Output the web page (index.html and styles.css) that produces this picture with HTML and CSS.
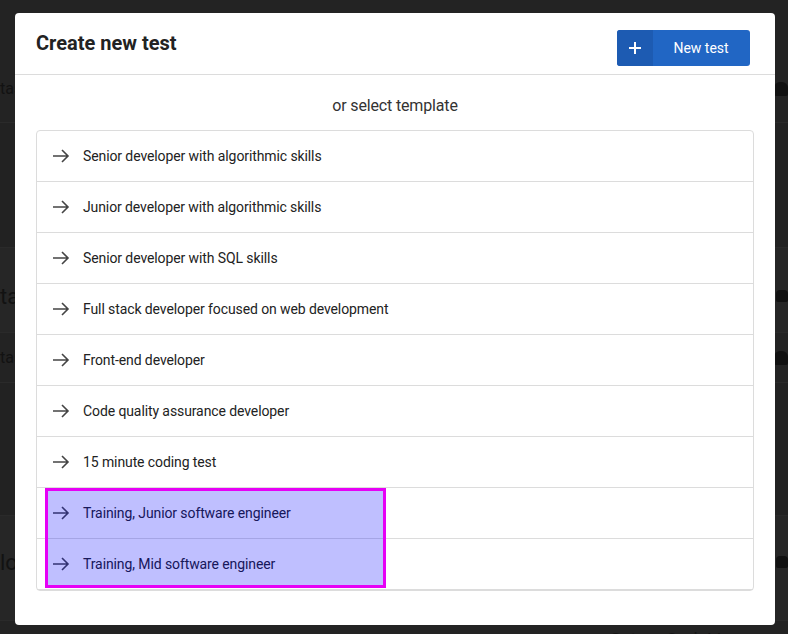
FILE: index.html
```html
<!DOCTYPE html>
<html>
<head>
<meta charset="utf-8">
<link rel="stylesheet" href="styles.css">
</head>
<body>
<div class="page">
  <div class="bg-row bg-r1"><span class="bg-text">tasks</span><span class="bg-icon person"></span></div>
  <div class="bg-row bg-r2"></div>
  <div class="bg-row bg-r3"><span class="bg-text big">tasks</span><span class="bg-icon car"></span></div>
  <div class="bg-row bg-r4"><span class="bg-text">tasks</span><span class="bg-icon person"></span></div>
  <div class="bg-row bg-r5"></div>
  <div class="bg-row bg-r6"><span class="bg-text big">lo</span><span class="bg-icon car"></span></div>
  <div class="bg-row bg-r7"><span class="bg-text">task</span><span class="bg-mid">Set up CodeLive</span><span class="bg-icon person"></span></div>
</div>

<div class="modal">
  <div class="modal-header">
    <h1 class="title">Create new test</h1>
    <button class="btn-new">
      <span class="btn-icon">
        <svg width="14" height="14" viewBox="0 0 14 14"><path d="M7 1v12M1 7h12" stroke="#fff" stroke-width="2" fill="none"/></svg>
      </span>
      <span class="btn-label">New test</span>
    </button>
  </div>
  <div class="modal-body">
    <div class="subtitle">or select template</div>
    <div class="list">
      <div class="item"><svg class="arrow" width="18" height="14" viewBox="0 0 18 14"><path d="M1 7h15M10 1l6 6-6 6" stroke="#444" stroke-width="1.6" fill="none"/></svg><span>Senior developer with algorithmic skills</span></div>
      <div class="item"><svg class="arrow" width="18" height="14" viewBox="0 0 18 14"><path d="M1 7h15M10 1l6 6-6 6" stroke="#444" stroke-width="1.6" fill="none"/></svg><span>Junior developer with algorithmic skills</span></div>
      <div class="item"><svg class="arrow" width="18" height="14" viewBox="0 0 18 14"><path d="M1 7h15M10 1l6 6-6 6" stroke="#444" stroke-width="1.6" fill="none"/></svg><span>Senior developer with SQL skills</span></div>
      <div class="item"><svg class="arrow" width="18" height="14" viewBox="0 0 18 14"><path d="M1 7h15M10 1l6 6-6 6" stroke="#444" stroke-width="1.6" fill="none"/></svg><span>Full stack developer focused on web development</span></div>
      <div class="item"><svg class="arrow" width="18" height="14" viewBox="0 0 18 14"><path d="M1 7h15M10 1l6 6-6 6" stroke="#444" stroke-width="1.6" fill="none"/></svg><span>Front-end developer</span></div>
      <div class="item"><svg class="arrow" width="18" height="14" viewBox="0 0 18 14"><path d="M1 7h15M10 1l6 6-6 6" stroke="#444" stroke-width="1.6" fill="none"/></svg><span>Code quality assurance developer</span></div>
      <div class="item"><svg class="arrow" width="18" height="14" viewBox="0 0 18 14"><path d="M1 7h15M10 1l6 6-6 6" stroke="#444" stroke-width="1.6" fill="none"/></svg><span>15 minute coding test</span></div>
      <div class="item"><svg class="arrow" width="18" height="14" viewBox="0 0 18 14"><path d="M1 7h15M10 1l6 6-6 6" stroke="#444" stroke-width="1.6" fill="none"/></svg><span>Training, Junior software engineer</span></div>
      <div class="item"><svg class="arrow" width="18" height="14" viewBox="0 0 18 14"><path d="M1 7h15M10 1l6 6-6 6" stroke="#444" stroke-width="1.6" fill="none"/></svg><span>Training, Mid software engineer</span></div>
      <div class="highlight"></div>
    </div>
  </div>
</div>
</body>
</html>
```

FILE: styles.css
```css
* { box-sizing: border-box; }
html, body { margin: 0; padding: 0; }
body {
  width: 788px;
  height: 634px;
  overflow: hidden;
  background: #232323;
  font-family: Roboto, "Liberation Sans", sans-serif;
  position: relative;
}

/* dimmed page behind the modal */
.page { display: flex; flex-direction: column; }
.bg-row {
  display: flex;
  align-items: center;
  justify-content: space-between;
  border-bottom: 1px solid #2a2a2a;
  color: #121212;
  font-size: 16px;
}
.bg-text { margin-left: 0; }
.bg-text.big { font-size: 22px; }
.bg-mid { font-size: 18px; margin-left: 580px; margin-right: auto; color: #151515; }
.bg-icon { width: 14px; height: 14px; background: #111; border-radius: 6px 6px 2px 2px; margin-right: 0; }
.bg-icon.car { border-radius: 4px 4px 2px 2px; height: 12px; width: 12px; }
.bg-r1 { height: 123px; padding-top: 55px; }
.bg-r2 { height: 125px; background: #222; }
.bg-r3 { height: 85px; padding-top: 12px; background: #262626; }
.bg-r4 { height: 50px; }
.bg-r5 { height: 133px; background: #222; }
.bg-r6 { height: 105px; padding-bottom: 12px; background: #262626; }
.bg-r7 { height: 30px; align-items: flex-end; }

/* modal */
.modal {
  position: absolute;
  left: 15px;
  top: 13px;
  width: 760px;
  background: #fff;
  border-radius: 4px;
}
.modal-header {
  display: flex;
  justify-content: space-between;
  align-items: flex-start;
  height: 62px;
  padding: 17px 25px 0 21px;
  border-bottom: 1px solid #dcdcdc;
}
.title {
  margin: 0;
  font-size: 20px;
  line-height: 26px;
  font-weight: 700;
  color: #222;
}
.btn-new {
  display: flex;
  height: 36px;
  width: 133px;
  padding: 0;
  border: none;
  border-radius: 3px;
  overflow: hidden;
  background: #2166c4;
  color: #fff;
  font-family: inherit;
  font-size: 14px;
  cursor: pointer;
}
.btn-icon {
  width: 36px;
  height: 36px;
  display: flex;
  align-items: center;
  justify-content: center;
  background: #1d5bb2;
}
.btn-label {
  flex: 1;
  display: flex;
  align-items: center;
  justify-content: center;
  padding-right: 1px;
}

.modal-body { padding: 19px 21px 34px 21px; }
.subtitle {
  text-align: center;
  font-size: 16px;
  line-height: 24px;
  color: #333;
  letter-spacing: -0.15px;
  margin-bottom: 12px;
}
.list {
  position: relative;
  border: 1px solid #dcdcdc;
  border-radius: 4px;
}
.item {
  display: flex;
  align-items: center;
  height: 51px;
  padding: 0 0 1px 15px;
  border-bottom: 1px solid #dcdcdc;
  font-size: 14px;
  letter-spacing: -0.1px;
  color: #222;
}
.item:last-of-type { border-bottom: none; height: 50px; padding-bottom: 0; }
.arrow { margin-right: 13px; flex: none; }

.highlight {
  position: absolute;
  left: 8px;
  top: 357px;
  width: 341px;
  height: 100px;
  border: 3px solid #e600f5;
  background: rgba(0, 0, 255, 0.25);
}
```
